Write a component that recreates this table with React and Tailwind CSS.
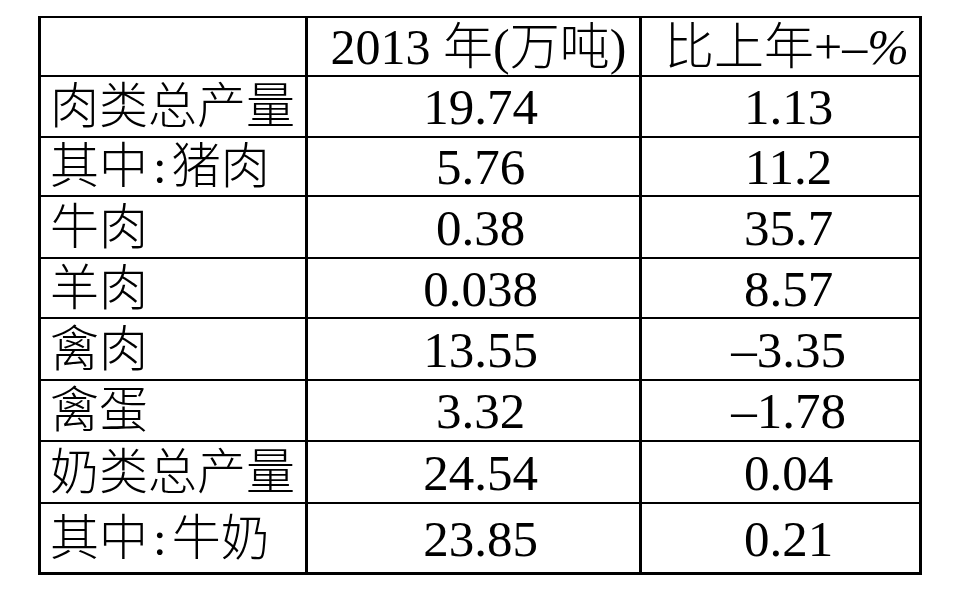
import React from 'react';

const rows = [
    { name: '肉类总产量', output: '19.74', change: '1.13', h: 'h-[61px]' },
    { name: '其中:猪肉', output: '5.76', change: '11.2', h: 'h-[59px]' },
    { name: '牛肉', output: '0.38', change: '35.7', h: 'h-[62px]' },
    { name: '羊肉', output: '0.038', change: '8.57', h: 'h-[60px]' },
    { name: '禽肉', output: '13.55', change: '–3.35', h: 'h-[62px]' },
    { name: '禽蛋', output: '3.32', change: '–1.78', h: 'h-[61px]' },
    { name: '奶类总产量', output: '24.54', change: '0.04', h: 'h-[62px]' },
    { name: '其中:牛奶', output: '23.85', change: '0.21', h: 'h-[68px]' },
];

function Name({ text }) {
    // the colon sits between full-width characters with a little room on both sides
    const parts = text.split(':');
    if (parts.length === 1) return <span>{text}</span>;
    return (
        <span>
            {parts[0]}
            <span className="px-[5px]">:</span>
            {parts[1]}
        </span>
    );
}

function App() {
    return (
        <div
            className="w-[957px] h-[595px] bg-white pt-[16px] pl-[38px] text-black"
            style={{ fontFamily: "'Liberation Serif', 'Noto Sans CJK SC', serif" }}
        >
            <div className="w-[884px] border-l-[3px] border-r-[3px] border-t-2 border-b-[3px] border-black">
                <div className="flex h-[59px] border-b-2 border-black">
                    <div className="w-[264px]" />
                    <div className="w-[334px] border-l-[3px] border-black flex items-center justify-center pl-[10px] text-[50px] font-light leading-none whitespace-nowrap">
                        2013 年(万吨)
                    </div>
                    <div className="flex-1 border-l-[3px] border-black flex items-center justify-center pl-[12px] text-[50px] font-light leading-none whitespace-nowrap">
                        比上年+–<span className="italic">%</span>
                    </div>
                </div>
                {rows.map((row, i) => (
                    <div
                        key={row.name}
                        className={`flex ${row.h} ${i < rows.length - 1 ? 'border-b-2 border-black' : ''}`}
                    >
                        <div className="w-[264px] flex items-center pl-[9px] text-[49px] font-light leading-none whitespace-nowrap">
                            <Name text={row.name} />
                        </div>
                        <div className="w-[334px] border-l-[3px] border-black flex items-center justify-center pl-[14px] pt-[2px] text-[51px] leading-none">
                            {row.output}
                        </div>
                        <div className="flex-1 border-l-[3px] border-black flex items-center justify-center pl-[16px] pt-[2px] text-[51px] leading-none">
                            {row.change}
                        </div>
                    </div>
                ))}
            </div>
        </div>
    );
}

export default App;
